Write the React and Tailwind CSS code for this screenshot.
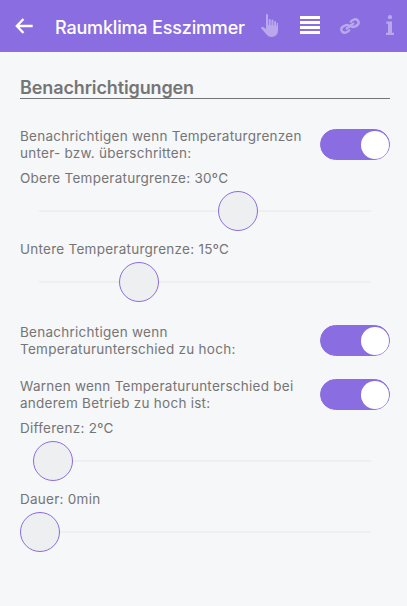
import React, { useState } from 'react';

const Toggle = ({ checked, onChange }) => (
    <button
        role="switch"
        aria-checked={checked}
        onClick={() => onChange(!checked)}
        className={
            checked
                ? 'flex h-[31px] w-[70px] shrink-0 items-center justify-end rounded-full border border-[#8a6de0] bg-[#8a6de0] pr-[0.5px]'
                : 'flex h-[31px] w-[70px] shrink-0 items-center justify-start rounded-full border border-[#8a6de0] bg-[#eeeff1]'
        }
    >
        <span className="h-[28px] w-[28px] rounded-full bg-white" />
    </button>
);

const SwitchRow = ({ children }) => {
    const [checked, setChecked] = useState(true);

    return (
        <div className="flex h-[31px] items-start justify-between">
            <div className="-mt-px whitespace-nowrap">{children}</div>
            <Toggle checked={checked} onChange={setChecked} />
        </div>
    );
};

const Slider = ({ offset }) => (
    <div className="mt-1 flex h-10 w-[370px] items-center">
        <div className="ml-[19px] h-[2px] w-[332px] bg-[#eeeff1]" />
        <div
            className="absolute h-10 w-10 rounded-full border border-[#8a6de0] bg-[#eeeff1]"
            style={{ marginLeft: offset }}
        />
    </div>
);

const Header = () => (
    <div className="flex h-[52px] items-center bg-[#8a6de0] text-white">
        <svg
            className="ml-[15px] h-[16px] w-[18px]"
            viewBox="0 0 18 16"
            fill="none"
            stroke="currentColor"
            strokeWidth="2.3"
        >
            <path d="M8.5 1L1.8 8l6.7 7M2 8h15.7" />
        </svg>
        <h1 className="ml-[22px] mt-[3px] w-[191px] whitespace-nowrap font-['Inter'] text-[18px] font-medium leading-[24px] tracking-[-0.17px]">
            Raumklima Esszimmer
        </h1>
        <svg
            className="ml-[15px] -mt-px h-[23px] w-[17px] text-[#b9a8ec]"
            viewBox="0 0 17 23"
            fill="currentColor"
        >
            <path d="M5 1Q5 0 6 0T7 1V11H7.7V6Q7.8 5 8.7 5T9.7 6V11.3H10.4V6.5Q10.5 5.6 11.4 5.6T12.4 6.5V11.6H13.1V8Q13.2 7 14.1 7T15 8V12H15.6V9.5Q15.7 8.7 16.3 8.7T17 9.5V16.5Q17 20 14 22Q12.5 23 10.3 23Q7.5 23 6 21L.3 14.4Q-.1 13.5.7 13Q1.6 12.6 2.5 13.2L5 15Z" />
        </svg>
        <svg
            className="ml-[22px] -mt-[2px] h-[18px] w-5"
            viewBox="0 0 20 18"
            fill="currentColor"
        >
            <path d="M0 0h20v3H0zM0 5h20v3H0zM0 10h20v3H0zM0 15h20v3H0z" />
        </svg>
        <svg
            className="ml-5 h-4 w-5 text-[#b9a8ec]"
            viewBox="0 0 20 16"
            fill="none"
            stroke="currentColor"
            strokeWidth="2.4"
            strokeLinecap="round"
        >
            <path d="M9.6 8.6Q7.6 6 4.6 7.7Q.7 9.5 1.4 12.1Q2.4 15.2 5.5 14.7Q8.3 14 9.2 12.3" />
            <path d="M10.4 7.4Q12.4 10 15.4 8.3Q19.3 6.5 18.6 3.9Q17.6.8 14.5 1.3Q11.7 2 10.8 3.7" />
            <path d="M6.6 10.6L13.2 5.6" />
        </svg>
        <svg
            className="ml-[26px] -mt-[2px] h-5 w-2 text-[#b9a8ec]"
            viewBox="0 0 8 20"
            fill="currentColor"
        >
            <circle cx="4" cy="2.2" r="2.1" />
            <path d="M.3 6.5H6V17.7H8V20H0V17.7H2V8.7H.3Z" />
        </svg>
    </div>
);

const App = () => {
    return (
        <div className="h-[606px] w-[407px] overflow-hidden bg-[#f6f7f9] font-['Inter',sans-serif] text-[13.5px] leading-[17px] tracking-[0.26px] text-[#757575]">
            <Header />
            <div className="w-[390px] pl-5">
                <h2 className="h-[47px] border-b border-[#757575] pt-[25px] text-[18px] font-semibold leading-[22px] tracking-[-0.12px]">
                    Benachrichtigungen
                </h2>

                <div className="pt-[30px]">
                    <SwitchRow>
                        <p>Benachrichtigen wenn Temperaturgrenzen</p>
                        <p>unter- bzw. überschritten:</p>
                    </SwitchRow>
                    <p className="mt-[10px]">Obere Temperaturgrenze: 30ºC</p>
                    <Slider offset={198} />
                    <p className="mt-[10px]">Untere Temperaturgrenze: 15ºC</p>
                    <Slider offset={99} />
                </div>

                <div className="pt-[23px]">
                    <SwitchRow>
                        <p>Benachrichtigen wenn</p>
                        <p>Temperaturunterschied zu hoch:</p>
                    </SwitchRow>
                </div>

                <div className="pt-[23px]">
                    <SwitchRow>
                        <p>Warnen wenn Temperaturunterschied bei</p>
                        <p>anderem Betrieb zu hoch ist:</p>
                    </SwitchRow>
                    <p className="mt-[10px]">Differenz: 2ºC</p>
                    <Slider offset={13} />
                    <p className="mt-[10px]">Dauer: 0min</p>
                    <Slider offset={0} />
                </div>
            </div>
        </div>
    );
};

export default App;
